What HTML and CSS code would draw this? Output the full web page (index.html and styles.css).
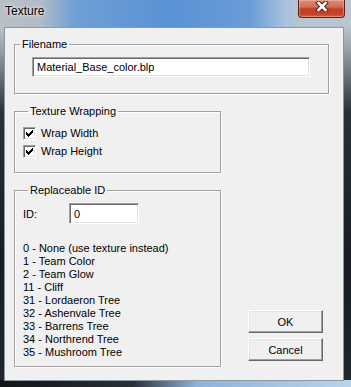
FILE: index.html
```html
<!DOCTYPE html>
<html lang="en">
<head>
  <meta charset="UTF-8">
  <title>Texture</title>
  <link rel="stylesheet" href="styles.css">
</head>
<body>

  <div class="window">
    <div class="titlebar">
      <span class="title">Texture</span>
      <button class="close" title="Close">
        <svg width="14" height="11" viewBox="0 0 14 11">
          <path d="M3.5 2 L10.5 9 M10.5 2 L3.5 9" stroke="#4a2418" stroke-width="4.6" stroke-linecap="square"/>
          <path d="M3.5 2 L10.5 9 M10.5 2 L3.5 9" stroke="#ffffff" stroke-width="2.6" stroke-linecap="square"/>
        </svg>
      </button>
    </div>

    <div class="client">
      <fieldset class="group group-file">
        <legend>Filename</legend>
        <div class="edit edit-file">Material_Base_color.blp</div>
      </fieldset>

      <div class="lower">
        <div class="left-col">
          <fieldset class="group group-wrap">
            <legend>Texture Wrapping</legend>
            <label class="check">
              <span class="box">
                <svg width="11" height="11" viewBox="0 0 11 11" shape-rendering="crispEdges">
                  <rect x="2" y="4" width="1" height="3"/><rect x="3" y="5" width="1" height="3"/>
                  <rect x="4" y="6" width="1" height="3"/><rect x="5" y="5" width="1" height="3"/>
                  <rect x="6" y="4" width="1" height="3"/><rect x="7" y="3" width="1" height="3"/>
                  <rect x="8" y="2" width="1" height="3"/>
                </svg>
              </span>
              Wrap Width
            </label>
            <label class="check">
              <span class="box">
                <svg width="11" height="11" viewBox="0 0 11 11" shape-rendering="crispEdges">
                  <rect x="2" y="4" width="1" height="3"/><rect x="3" y="5" width="1" height="3"/>
                  <rect x="4" y="6" width="1" height="3"/><rect x="5" y="5" width="1" height="3"/>
                  <rect x="6" y="4" width="1" height="3"/><rect x="7" y="3" width="1" height="3"/>
                  <rect x="8" y="2" width="1" height="3"/>
                </svg>
              </span>
              Wrap Height
            </label>
          </fieldset>

          <fieldset class="group group-id">
            <legend>Replaceable ID</legend>
            <div class="id-row">
              <span class="id-label">ID:</span>
              <div class="edit edit-id">0</div>
            </div>
            <ul class="id-list">
              <li>0 - None (use texture instead)</li>
              <li>1 - Team Color</li>
              <li>2 - Team Glow</li>
              <li>11 - Cliff</li>
              <li>31 - Lordaeron Tree</li>
              <li>32 - Ashenvale Tree</li>
              <li>33 - Barrens Tree</li>
              <li>34 - Northrend Tree</li>
              <li>35 - Mushroom Tree</li>
            </ul>
          </fieldset>
        </div>

        <div class="buttons">
          <button class="btn">OK</button>
          <button class="btn">Cancel</button>
        </div>
      </div>
    </div>
  </div>

</body>
</html>
```

FILE: styles.css
```css
:root {
  --face: #f0f0f0;
  --shadow: #a0a0a0;
  --dark: #696969;
  --light: #e3e3e3;
  --group-line: #a0a0a0;
}

body {
  margin: 0;
  padding: 0;
  font-family: 'Liberation Sans', Arial, sans-serif;
  font-size: 11px;
  color: #000;
  background: #1b1f25;
}

.window {
  width: 351px;
  height: 387px;
  display: flex;
  flex-direction: column;
  background-color: #22272e;
  background-image:
    linear-gradient(to right, #111418 0%, #2a3038 38%, #8db3da 56%, #b9d3ec 100%),
    linear-gradient(180deg, #b4bcc4 0, #c3cbd3 22px, #9aa3ac 48px, #2b3037 112px, #181c22 260px, #22272e 100%);
  background-position: left bottom, left top;
  background-size: 100% 7px, 100% 100%;
  background-repeat: no-repeat;
}

/* title bar */
.titlebar {
  height: 27px;
  display: flex;
  justify-content: space-between;
  align-items: flex-start;
  padding: 0 6px 0 5px;
  box-sizing: border-box;
  background: linear-gradient(to right, #b8c0c8 0, #b2bcc6 40px, #6f9fd6 75px, #5a92d4 170px, #6a9cd8 250px, #a8c2de 285px, #b8c4d0 300px, #b8c4d0 100%);
}

.title {
  font-size: 12px;
  line-height: 15px;
  margin-top: 4px;
  color: #000;
  text-shadow: 0 0 5px rgba(255, 255, 255, 0.9), 0 0 2px rgba(255, 255, 255, 0.7);
}

.close {
  width: 47px;
  height: 18px;
  padding: 0;
  border: 1px solid #5a1f15;
  border-top: none;
  border-radius: 0 0 4px 4px;
  background: linear-gradient(180deg, #dc8d7c 0, #d26f58 40%, #c24127 52%, #c43f25 80%, #d8603c 100%);
  box-shadow: inset 0 0 0 1px rgba(255, 220, 200, 0.35);
  display: flex;
  justify-content: center;
  align-items: flex-start;
  padding-top: 1px;
}

.close svg {
  display: block;
}

/* client area */
.client {
  flex: 1;
  margin: 0 7px 6px 4px;
  border: 1px solid #8d98a4;
  background: var(--face);
  padding: 10px 0 0 9px;
}

.group {
  margin: 0;
  padding: 0;
  border: 1px solid var(--group-line);
  box-shadow: inset 1px 1px #fff, 1px 1px #fff;
  min-width: 0;
}

.group legend {
  margin-left: 5px;
  padding: 0 2px;
  line-height: 13px;
  font-size: 11px;
}

.group-file {
  width: 315px;
  box-sizing: border-box;
  padding-bottom: 16px;
}

.edit {
  box-sizing: border-box;
  background: #fff;
  border: 1px solid;
  border-color: var(--shadow) #fff #fff var(--shadow);
  box-shadow: inset 1px 1px var(--dark), inset -1px -1px var(--light);
  display: flex;
  align-items: center;
  padding-left: 4px;
}

.edit-file {
  margin: 6px 0 0 17px;
  width: 278px;
  height: 20px;
}

.lower {
  display: flex;
  gap: 27px;
}

.left-col {
  width: 207px;
  display: flex;
  flex-direction: column;
}

.group-wrap {
  margin-top: 11px;
  padding: 9px 0 14px 8px;
  display: flex;
  flex-direction: column;
  gap: 5px;
}

.check {
  display: flex;
  align-items: center;
  gap: 5px;
  height: 13px;
  line-height: 13px;
}

.box {
  width: 13px;
  height: 13px;
  box-sizing: border-box;
  background: #fff;
  border: 1px solid;
  border-color: var(--shadow) #fff #fff var(--shadow);
  box-shadow: inset 1px 1px var(--dark), inset -1px -1px var(--light);
}

.box svg {
  display: block;
}

.group-id {
  margin-top: 11px;
  padding: 6px 0 7px 8px;
}

.id-row {
  display: flex;
  align-items: center;
}

.id-label {
  width: 46px;
}

.edit-id {
  width: 70px;
  height: 21px;
}

.id-list {
  list-style: none;
  margin: 18px 0 0;
  padding: 0;
}

.id-list li {
  line-height: 13px;
  height: 13px;
}

/* dialog buttons */
.buttons {
  align-self: flex-end;
  display: flex;
  flex-direction: column;
  gap: 5px;
  margin-bottom: 6px;
}

.btn {
  width: 75px;
  height: 23px;
  padding: 0;
  font-family: inherit;
  font-size: 11px;
  color: #000;
  background: var(--face);
  border: 1px solid;
  border-color: #fff var(--dark) var(--dark) #fff;
  box-shadow: inset -1px -1px var(--shadow), inset 1px 1px var(--light);
}
```
